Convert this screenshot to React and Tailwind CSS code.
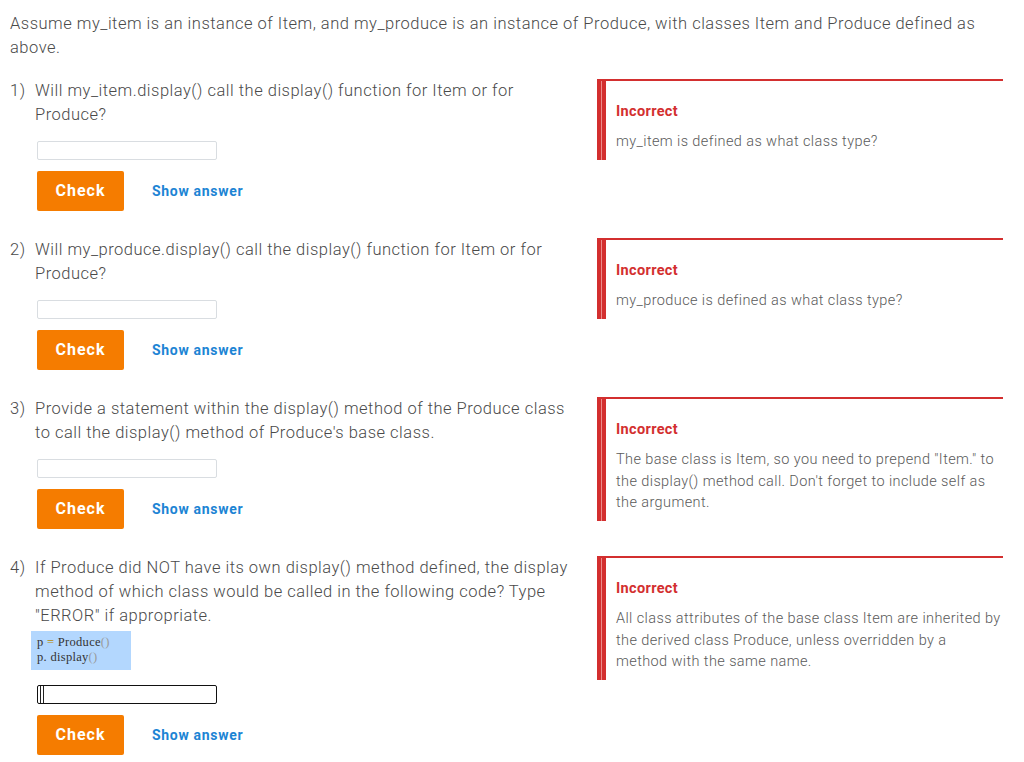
import React from 'react';

const questions = [
  {
    n: '1)',
    text: 'Will my_item.display() call the display() function for Item or for Produce?',
    feedback: 'my_item is defined as what class type?',
  },
  {
    n: '2)',
    text: 'Will my_produce.display() call the display() function for Item or for Produce?',
    feedback: 'my_produce is defined as what class type?',
  },
  {
    n: '3)',
    text: "Provide a statement within the display() method of the Produce class to call the display() method of Produce's base class.",
    feedback:
      'The base class is Item, so you need to prepend "Item." to the display() method call. Don\'t forget to include self as the argument.',
  },
  {
    n: '4)',
    text: 'If Produce did NOT have its own display() method defined, the display method of which class would be called in the following code? Type "ERROR" if appropriate.',
    feedback:
      'All class attributes of the base class Item are inherited by the derived class Produce, unless overridden by a\nmethod with the same name.',
    code: true,
    focused: true,
  },
];

function CodeBlock() {
  return (
    <div
      className="ml-[-4px] mt-[3px] w-[100px] h-[39px] bg-[#b3d7fe] pl-[6px] pt-[4px] text-[12.5px] leading-[15px] text-[#333] tracking-[0.3px]"
      style={{ fontFamily: '"Liberation Serif", serif' }}
    >
      <div>
        p <span className="text-[#b58900]">=</span> Produce<span className="text-[#999]">()</span>
      </div>
      <div>
        p.&nbsp;display<span className="text-[#999]">()</span>
      </div>
    </div>
  );
}

function Feedback({ text }) {
  return (
    <div className="w-[406px] border-t-2 border-[#d32f2f] flex">
      <div className="w-[9px] shrink-0 flex bg-[#d32f2f]">
        <div className="w-[4px]" />
        <div className="w-[1px] bg-[#ec8b8b]" />
      </div>
      <div className="pl-[10px] pt-[21px] pb-[7px] flex-1">
        <p className="text-[14.5px] leading-[20px] font-bold text-[#d32f2f] tracking-[0.35px]">Incorrect</p>
        <p className="w-[386px] mt-[9px] text-[14.5px] leading-[21.5px] font-light text-[#5a5a5a] tracking-[0.4px] whitespace-pre-line">
          {text}
        </p>
      </div>
    </div>
  );
}

function Question({ q }) {
  return (
    <div className="flex items-start mb-[27px]">
      <div className="w-[587px] flex">
        <span className="w-[25px] shrink-0 text-[16.5px] leading-[24px] font-light text-[#4a4a4a] tracking-[0.5px]">
          {q.n}
        </span>
        <div className="w-[537px]">
          <p className="text-[16.5px] leading-[24px] font-light text-[#4a4a4a] tracking-[0.5px]">{q.text}</p>
          {q.code && <CodeBlock />}
          {q.focused ? (
            <div className="ml-[2px] mt-[15px] w-[180px] h-[19px] rounded-[2px] border-[1.5px] border-[#111] bg-white flex pl-[2px]">
              <span className="w-[4px] h-full border-x border-[#222]" />
            </div>
          ) : (
            <div className="ml-[2px] mt-[14px] w-[180px] h-[19px] rounded-[2px] border border-[#d9dde1] bg-white" />
          )}
          <div className="ml-[2px] mt-[11px] flex items-center">
            <button
              type="button"
              className="w-[87px] h-[40px] rounded-[2px] bg-[#f57c00] text-white text-[16px] font-bold tracking-[1px]"
            >
              Check
            </button>
            <button type="button" className="ml-[28px] text-[14px] font-bold text-[#1c84d4] tracking-[0.7px]">
              Show answer
            </button>
          </div>
        </div>
      </div>
      <Feedback text={q.feedback} />
    </div>
  );
}

export default function App() {
  return (
    <div
      className="w-[1024px] min-h-[762px] bg-white pl-[10px] pt-[12px]"
      style={{ fontFamily: 'Roboto, "Liberation Sans", sans-serif' }}
    >
      <p className="w-[990px] text-[16.5px] leading-[24px] font-light text-[#4a4a4a] tracking-[0.5px]">
        Assume my_item is an instance of Item, and my_produce is an instance of Produce, with classes Item and Produce
        defined as above.
      </p>
      <div className="mt-[19px]">
        {questions.map((q) => (
          <Question key={q.n} q={q} />
        ))}
      </div>
    </div>
  );
}
